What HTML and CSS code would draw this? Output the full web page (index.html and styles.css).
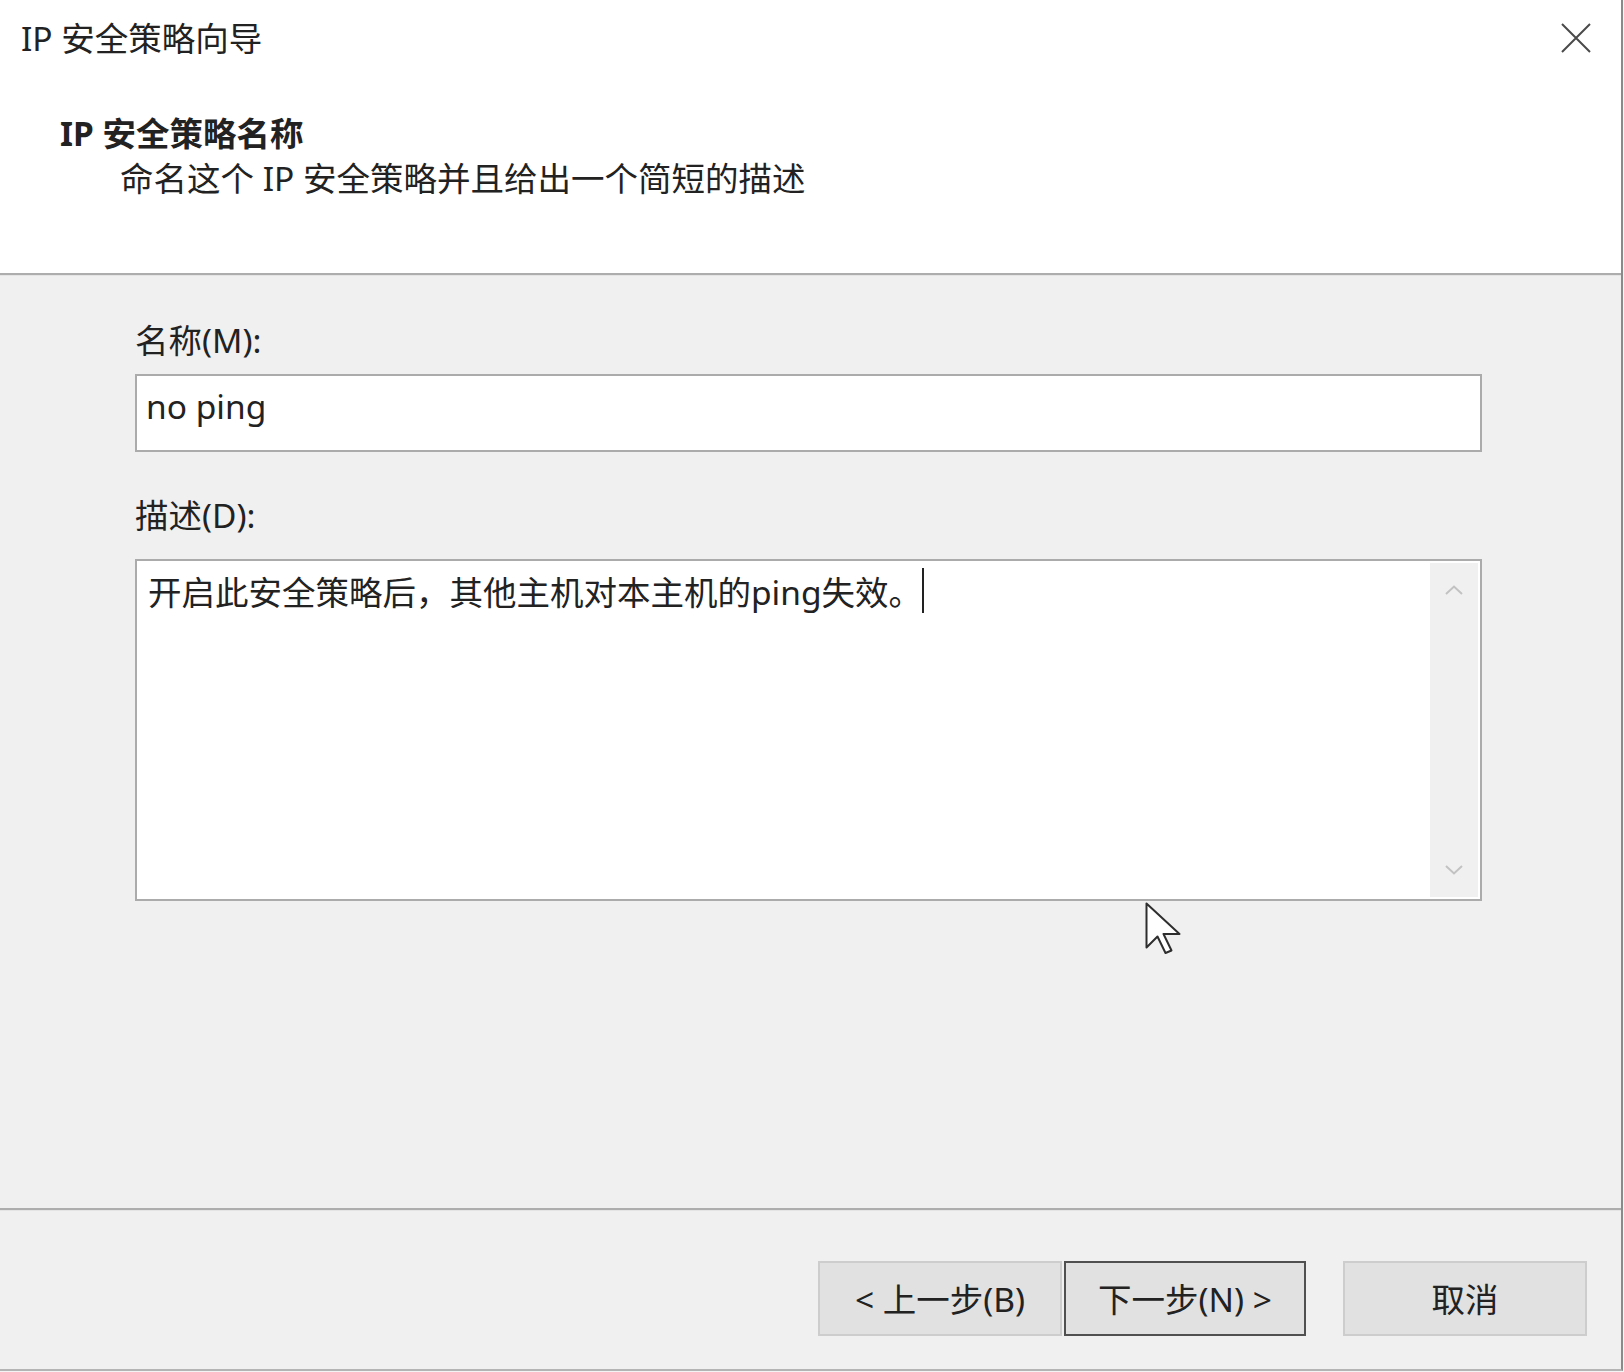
FILE: index.html
```html
<!DOCTYPE html>
<html lang="zh-CN">
<head>
<meta charset="utf-8">
<title>IP 安全策略向导</title>
<link rel="stylesheet" href="styles.css">
</head>
<body>
<div class="dialog">
  <header class="head">
    <div class="titlebar">
      <span class="title">IP 安全策略向导</span>
      <svg class="close" viewBox="0 0 30 30" aria-label="关闭">
        <path d="M1 1 L29 29 M29 1 L1 29" />
      </svg>
    </div>
    <div class="page-head">
      <h1 class="page-title">IP 安全策略名称</h1>
      <p class="page-desc">命名这个 IP 安全策略并且给出一个简短的描述</p>
    </div>
  </header>
  <div class="rule"></div>
  <main class="body">
    <label class="label">名称(M):</label>
    <div class="field">no ping</div>
    <label class="label label-desc">描述(D):</label>
    <div class="area">
      <div class="area-text">开启此安全策略后，其他主机对本主机的ping失效。<span class="caret"></span></div>
      <div class="vscroll">
        <svg class="chev" viewBox="0 0 18 10"><path d="M1 9 L9 1.5 L17 9" /></svg>
        <svg class="chev" viewBox="0 0 18 10"><path d="M1 1 L9 8.5 L17 1" /></svg>
      </div>
    </div>
  </main>
  <div class="rule"></div>
  <footer class="actions">
    <button class="btn">&lt; 上一步(B)</button>
    <button class="btn btn-default">下一步(N) &gt;</button>
    <button class="btn btn-cancel">取消</button>
  </footer>
  <svg class="pointer" viewBox="0 0 40 56">
    <path d="M1.5 1.5 L1.5 45.5 L12.5 34.5 L20.5 51 L26.5 48.5 L18.5 32 L34.5 32 Z" />
  </svg>
</div>
</body>
</html>
```
FILE: styles.css
```css
* {
  box-sizing: border-box;
}

html,
body {
  margin: 0;
}

body {
  width: 1624px;
  height: 1372px;
  overflow: hidden;
  background: #f4f4f4;
  font-family: "Noto Sans", "Noto Sans CJK SC", sans-serif;
  font-size: 33.5px;
  color: #222;
}

/* window frame */
.dialog {
  position: relative;
  width: 1623px;
  height: 1371px;
  display: flex;
  flex-direction: column;
  background: #f0f0f0;
  border-right: 2px solid #8a8a8a;
  border-bottom: 2px solid #b4b4b4;
}

/* white wizard header */
.head {
  flex: none;
  height: 273px;
  background: #fff;
}

.titlebar {
  display: flex;
  align-items: center;
  justify-content: space-between;
  height: 40px;
  margin-top: 18px;
  padding: 0 30px 0 21px;
}

.title {
  line-height: 40px;
}

.close {
  display: block;
  width: 30px;
  height: 30px;
}

.close path {
  fill: none;
  stroke: #4a4a4a;
  stroke-width: 2;
}

.page-head {
  margin-top: 55px;
  padding-left: 60px;
}

.page-title {
  margin: 0;
  font-size: 33.5px;
  font-weight: 700;
  line-height: 40px;
}

.page-desc {
  margin: 5px 0 0 60px;
  line-height: 40px;
}

/* etched separators */
.rule {
  flex: none;
  height: 3px;
  border-top: 2px solid #adadad;
  border-bottom: 1px solid #e4e4e4;
}

/* form area */
.body {
  flex: 1;
  padding: 44px 0 0 135px;
}

.label {
  display: block;
  line-height: 40px;
}

.label-desc {
  margin-top: 43px;
}

.field {
  width: 1347px;
  height: 78px;
  margin-top: 14px;
  padding: 10px 7px 6px 9px;
  line-height: 40px;
  background: #fff;
  border: 2px solid #ababab;
}

.area {
  display: flex;
  width: 1347px;
  height: 342px;
  margin-top: 24px;
  padding: 2px;
  background: #fff;
  border: 2px solid #ababab;
}

.area-text {
  flex: 1;
  padding: 9px;
  line-height: 40px;
}

.caret {
  display: inline-block;
  width: 2px;
  height: 45px;
  margin: -5px 0 0 0;
  vertical-align: -8px;
  background: #222;
}

.vscroll {
  flex: none;
  width: 48px;
  display: flex;
  flex-direction: column;
  justify-content: space-between;
  align-items: center;
  padding: 22px 0;
  background: #f0f0f0;
}

.chev {
  display: block;
  width: 18px;
  height: 10px;
}

.chev path {
  fill: none;
  stroke: #c2c2c2;
  stroke-width: 2;
}

/* wizard buttons */
.actions {
  flex: none;
  height: 158px;
  display: flex;
  justify-content: flex-end;
  align-items: flex-start;
  padding: 50px 34px 0 0;
}

.btn {
  width: 244px;
  height: 75px;
  padding: 0;
  font: inherit;
  line-height: 40px;
  color: #222;
  background: #e1e1e1;
  border: 2px solid #cdcdcd;
}

.btn-default {
  width: 242px;
  margin-left: 2px;
  border-color: #505050;
}

.btn-cancel {
  margin-left: 37px;
}

/* mouse pointer resting over the form */
.pointer {
  position: absolute;
  left: 1145px;
  top: 902px;
  width: 40px;
  height: 56px;
  pointer-events: none;
}

.pointer path {
  fill: #fff;
  stroke: #2e2e2e;
  stroke-width: 2;
  stroke-linejoin: round;
}
```
